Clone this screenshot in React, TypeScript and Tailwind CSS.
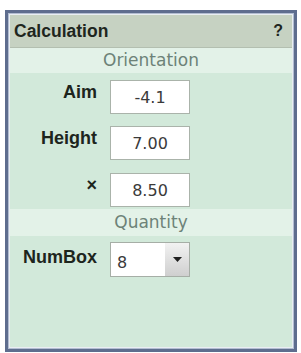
import React from 'react';

const labelFont = { fontFamily: '"Liberation Sans", Arial, sans-serif' };

const Field: React.FC<{ label: string; value: string; className?: string }> = ({ label, value, className }) => (
  <div className={`flex items-start ${className ?? ''}`}>
    <div className="w-[87px] pt-[2px] text-right text-[18px] font-bold leading-[20px] text-[#1d251d]">{label}</div>
    <div className="ml-[13px] flex h-[34px] w-[80px] items-center justify-center border border-[#aab3aa] bg-white pt-[2px] font-['DejaVu_Sans',sans-serif] text-[16px] text-[#3a3a3a]">
      {value}
    </div>
  </div>
);

const Band: React.FC<{ title: string; className?: string }> = ({ title, className }) => (
  <div
    className={`flex items-center justify-center bg-[#e3f2e8] font-['DejaVu_Sans',sans-serif] text-[17px] text-[#6d8278] ${className ?? ''}`}
  >
    {title}
  </div>
);

const App: React.FC = () => {
  return (
    <div className="h-[353px] w-[301px] bg-white pl-[5px] pt-[10px]" style={labelFont}>
      <div className="h-[342px] w-[292px] border-[3px] border-[#5e6d8e] bg-[#b2bdd1] p-[1px]">
        <div className="flex h-full w-full flex-col border border-[#e9eef2] bg-[#d2e9da]">
          {/* header */}
          <div className="flex h-[33px] shrink-0 items-center justify-between border-b border-[#b3bfb0] bg-[#c6d2c2] pl-[4px] pr-[9px]">
            <span className="text-[17.5px] font-bold text-[#1e261e]">Calculation</span>
            <span className="text-[16px] font-bold text-[#1e261e]">?</span>
          </div>

          <Band title="Orientation" className="h-[25px]" />

          <div className="flex flex-col pt-[7px]">
            <Field label="Aim" value="-4.1" />
            <Field label="Height" value="7.00" className="mt-[12px]" />
            <Field label="×" value="8.50" className="mt-[13px]" />
          </div>

          <Band title="Quantity" className="mt-[2px] h-[27px]" />

          <div className="flex items-start pt-[6px]">
            <div className="w-[87px] pt-[5px] text-right text-[18px] font-bold leading-[20px] text-[#1d251d]">NumBox</div>
            <div className="ml-[13px] flex h-[35px] w-[80px] border border-[#a6aea6] bg-white">
              <div className="flex flex-1 items-center pl-[6px] pt-[6px] font-['DejaVu_Sans',sans-serif] text-[16px] text-[#3a3a3a]">
                8
              </div>
              <div className="flex w-[24px] items-center justify-center bg-gradient-to-b from-[#f2f2f2] to-[#cfcfcf]">
                <svg width="9" height="5" viewBox="0 0 9 5">
                  <path d="M0 0 L9 0 L4.5 5 Z" fill="#1f1f1f" />
                </svg>
              </div>
            </div>
          </div>

          <div className="flex-1" />
        </div>
      </div>
    </div>
  );
};

export default App;
